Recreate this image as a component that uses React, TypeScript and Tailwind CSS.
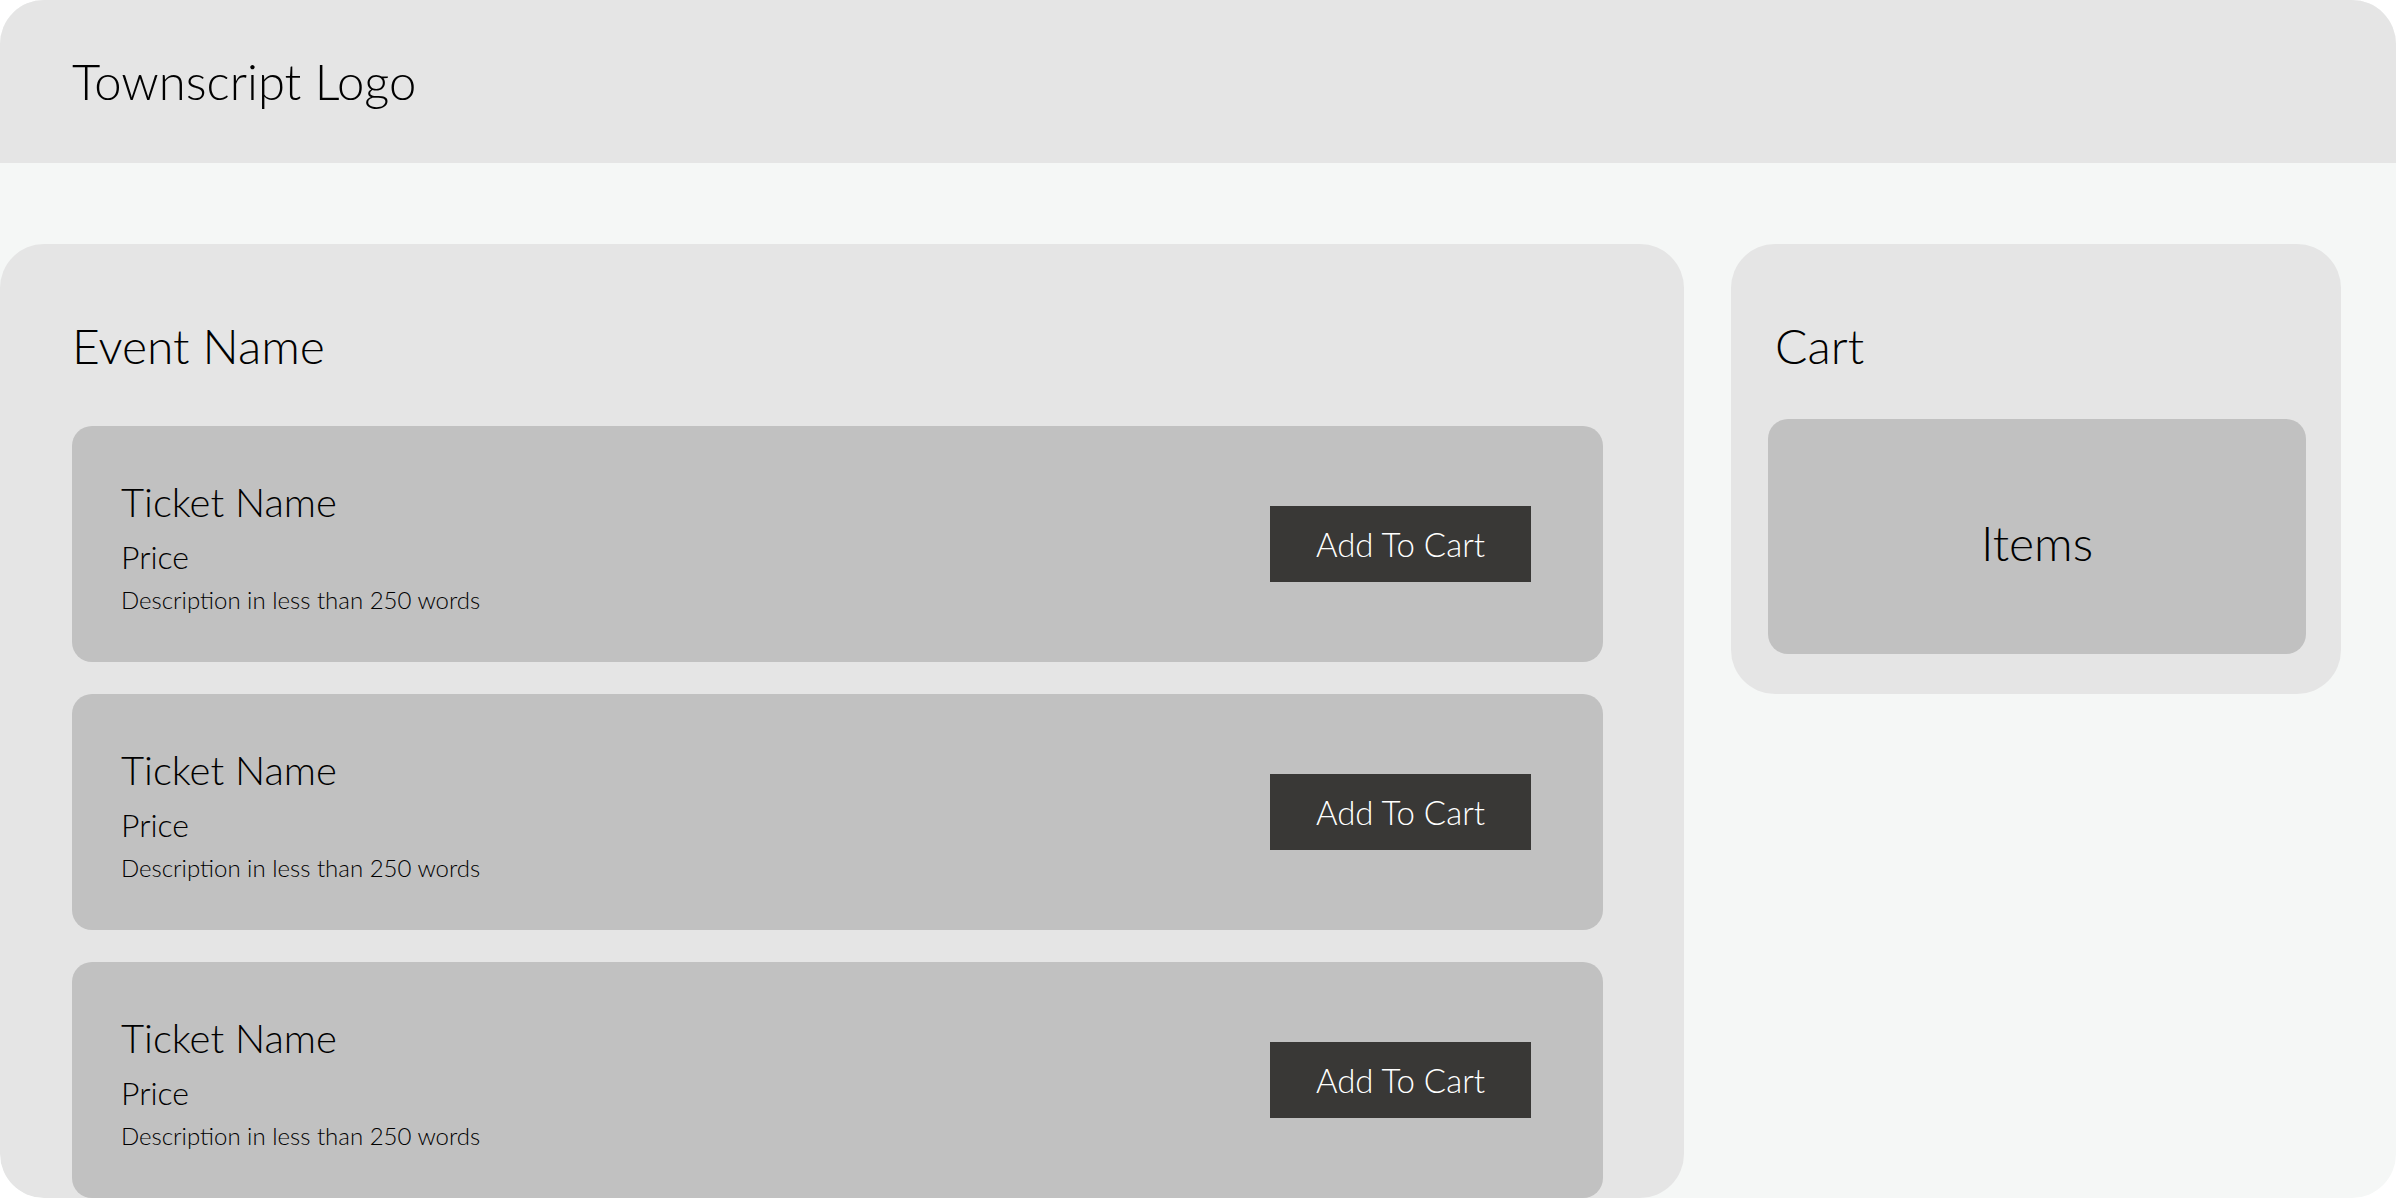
import React from "react";

function TicketCard() {
  return (
    <div className="flex h-[236px] w-[1531px] shrink-0 items-center justify-between rounded-[20px] bg-[#c1c1c1] pl-[49px] pr-[72px]">
      <div className="flex flex-col pt-[5px]">
        <div className="text-[40px] leading-none text-black">Ticket Name</div>
        <div className="mt-[19px] text-[32px] leading-none text-black">Price</div>
        <div className="mt-[15px] text-[24px] leading-none text-black">Description in less than 250 words</div>
      </div>
      <button className="flex h-[76px] w-[261px] items-center justify-center bg-[#393836] text-[33px] leading-none text-white">
        Add To Cart
      </button>
    </div>
  );
}

export default function App() {
  return (
    <div className="h-[1198px] w-[2396px] bg-white" style={{ fontFamily: "Lato, 'Open Sans', sans-serif" }}>
      <div className="flex h-[1198px] w-[2396px] flex-col overflow-hidden rounded-[44px] bg-[#f5f7f6] font-light">
        <header className="flex h-[163px] shrink-0 items-center bg-[#e5e5e5] px-[72px]">
          <div className="text-[49px] leading-none text-black">Townscript Logo</div>
        </header>
        <div className="mt-[81px] flex min-h-0 flex-1 items-start gap-[47px]">
          <section className="flex h-full w-[1684px] shrink-0 flex-col overflow-hidden rounded-[44px] bg-[#e5e5e5] pl-[72px] pt-[78px]">
            <h1 className="mb-[56px] text-[48px] leading-none text-black">Event Name</h1>
            <div className="flex flex-col gap-[32px]">
              <TicketCard />
              <TicketCard />
              <TicketCard />
            </div>
          </section>
          <aside className="flex h-[450px] w-[610px] shrink-0 flex-col rounded-[44px] bg-[#e5e5e5] pl-[37px] pr-[35px] pt-[78px]">
            <h2 className="mb-[49px] pl-[7px] text-[48px] leading-none text-black">Cart</h2>
            <div className="flex h-[235px] items-center justify-center rounded-[20px] bg-[#c1c1c1] pt-[12px] text-[48px] leading-none text-black">
              Items
            </div>
          </aside>
        </div>
      </div>
    </div>
  );
}
